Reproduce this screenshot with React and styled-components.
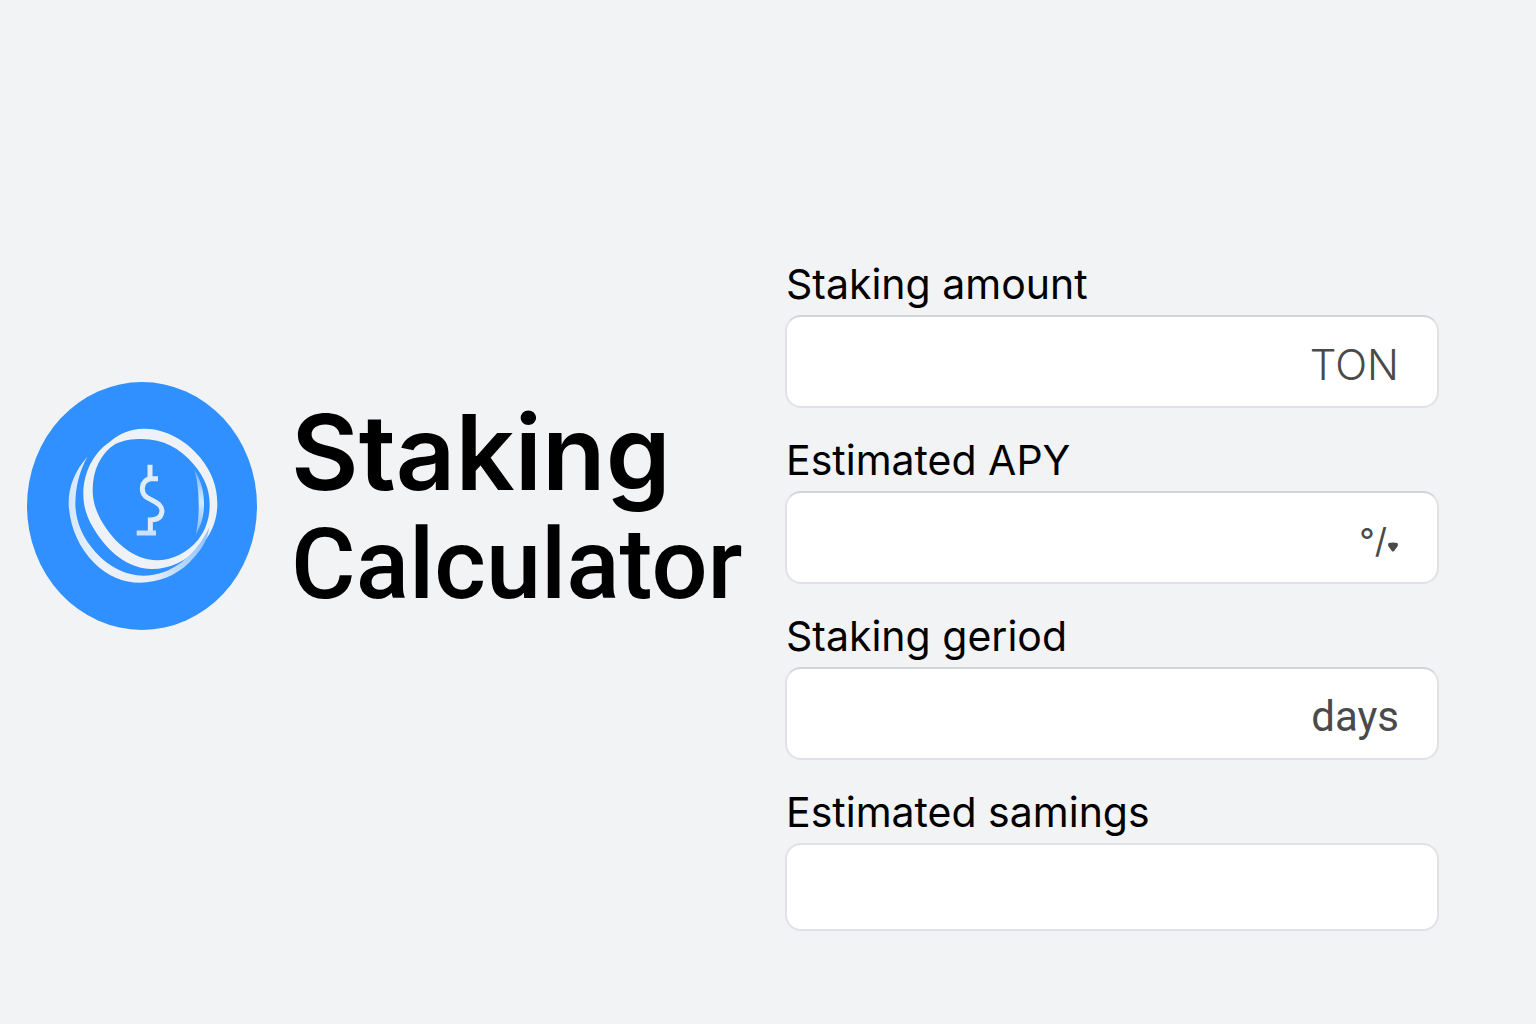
import React, { useState } from 'react'
import styled, { createGlobalStyle } from 'styled-components'

const cor_fundo = '#f2f3f5'
const cor_azul = '#3190ff'
const cor_texto = '#000000'
const cor_unidade = '#4a4a4a'
const cor_borda = '#e0e2e7'

const FIELDS = [
    { id: 'amount', label: 'Staking amount', unit: 'TON', tone: 'light' },
    { id: 'apy', label: 'Estimated APY', unit: '°/', tone: 'small', mark: true },
    { id: 'period', label: 'Staking geriod', unit: 'days', tone: 'regular' },
    { id: 'savings', label: 'Estimated samings' },
]

function CoinLogo() {
    return (
        <Coin viewBox="21 36 690 744" preserveAspectRatio="none" aria-hidden="true">
            <defs>
                <linearGradient id="outer" x1="0" y1="0" x2="1" y2="0">
                    <stop offset="0" stopColor="#d6e8fb" />
                    <stop offset="0.25" stopColor="#eef2f7" />
                    <stop offset="0.6" stopColor="#e6eef8" />
                    <stop offset="1" stopColor="#8cc1fd" />
                </linearGradient>
                <linearGradient id="shine" x1="0" y1="0" x2="0" y2="1">
                    <stop offset="0" stopColor="#6fb2fe" />
                    <stop offset="0.5" stopColor="#d9e9fb" />
                    <stop offset="1" stopColor="#7ab8fe" />
                </linearGradient>
            </defs>
            <ellipse cx="366" cy="408" rx="345" ry="372" fill={cor_azul} />
            <path
                fill="#eef2f7"
                fillRule="evenodd"
                d="M370 176 C434 174 500 212 540 262 C575 305 592 350 592 402 C592 450 574 494 540 530 C500 573 450 597 395 597 C330 595 278 556 240 504 C207 459 190 420 190 372 C190 308 220 248 270 215 C298 190 332 177 370 176 Z
                M366 207 C430 207 480 235 522 284 C552 320 569 356 569 402 C569 445 558 478 534 510 C502 548 456 571 410 571 C350 569 300 532 262 480 C235 442 218 405 218 360 C218 300 242 250 286 222 C310 211 334 207 366 207 Z"
            />
            <path
                fill="url(#outer)"
                d="M202 260 C164 304 145 350 146 404 C150 474 178 534 222 578 C262 618 310 638 360 638 C414 638 466 618 506 580 C542 544 562 514 568 472 C550 510 524 546 486 576 C448 604 412 617 370 617 C318 617 268 592 226 546 C188 502 168 458 166 404 C166 350 178 304 202 260 Z"
            />
            <path
                fill="url(#shine)"
                d="M524 300 C544 334 552 366 552 402 C552 438 544 464 528 492 C534 458 537 430 536 400 C536 366 532 334 524 300 Z"
            />
            <g fill="none" stroke="#dfebf9" strokeWidth="15">
                <path d="M390 284 V326 M414 326 H392 C362 330 360 370 382 383 C400 394 426 400 426 424 C424 446 406 450 391 450 V490" />
                <path d="M350 489 H408" stroke="#cbe0fa" />
            </g>
        </Coin>
    )
}

export default function App() {
    const [values, setValues] = useState({})

    return (
        <>
        <GlobalStyle />
        <Page>
            <Brand>
                <CoinLogo />
                <Title>
                    <FirstLine>Staking</FirstLine>
                    <SecondLine>Calculator</SecondLine>
                </Title>
            </Brand>
            <Form>
                {FIELDS.map(item =>
                    <Field key={item.id}>
                        <Label htmlFor={item.id}>{item.label}</Label>
                        <Box $short={!item.unit}>
                            <Input
                                id={item.id}
                                type="text"
                                value={values[item.id] || ''}
                                onChange={e => setValues({ ...values, [item.id]: e.target.value })}
                            />
                            {item.unit && <Unit $tone={item.tone}>{item.unit}</Unit>}
                            {item.mark &&
                                <Mark viewBox="0 0 10 9" aria-hidden="true">
                                    <path d="M1 1 Q5 0 9 1 Q10 3 9 4 L6 8 Q5 9 4 8 L1 4 Q0 3 1 1 Z" />
                                </Mark>}
                        </Box>
                    </Field>)}
            </Form>
        </Page>
        </>
    )
}

const GlobalStyle = createGlobalStyle`
    * {
        box-sizing: border-box;
    }
    body {
        margin: 0;
        background: ${cor_fundo};
        color: ${cor_texto};
        font-family: Inter, "Liberation Sans", sans-serif;
    }
`

const Page = styled.main`
    min-height: 100vh;
    display: grid;
    grid-template-columns: minmax(0, 714fr) minmax(0, 654fr);
    column-gap: 44px;
    align-items: center;
    padding: 0 97px 0 27px;
`

const Brand = styled.div`
    display: flex;
    align-items: center;
    gap: 34px;
    padding-bottom: 12px;
`

const Coin = styled.svg`
    flex: none;
    width: 230px;
    height: 248px;
`

const Title = styled.h1`
    margin: 0;
    padding-top: 8px;
    white-space: nowrap;
`

const FirstLine = styled.span`
    display: block;
    font-size: 104px;
    font-weight: 600;
    line-height: 108px;
`

const SecondLine = styled.span`
    display: block;
    font-family: Roboto, "Liberation Sans", sans-serif;
    font-size: 99px;
    font-weight: 500;
    line-height: 116px;
`

const Form = styled.form`
    display: flex;
    flex-direction: column;
    gap: 28px;
    padding-top: 167px;
`

const Field = styled.div`
    display: flex;
    flex-direction: column;
    gap: 7px;
`

const Label = styled.label`
    padding-left: 1px;
    font-size: 41px;
    line-height: 48px;
`

const Box = styled.div`
    display: flex;
    align-items: center;
    height: ${props => props.$short ? '88px' : '93px'};
    padding: 6px 38px 0 24px;
    background: #ffffff;
    border: 2px solid ${cor_borda};
    border-top-color: ${props => props.$short ? cor_borda : '#d3d5db'};
    border-radius: 16px;
`

const Input = styled.input`
    flex: 1;
    min-width: 0;
    height: 100%;
    padding: 0;
    border: none;
    outline: none;
    background: transparent;
    font: inherit;
    font-size: 41px;
`

const TONES = {
    light: 'font-size: 42px; font-weight: 300;',
    small: 'font-size: 34px; font-weight: 400;',
    regular: 'font-size: 42px; font-weight: 400; font-family: Roboto, "Liberation Sans", sans-serif;',
}

const Unit = styled.span`
    color: ${cor_unidade};
    line-height: 48px;
    ${props => TONES[props.$tone]}
`

const Mark = styled.svg`
    width: 12px;
    height: 10px;
    margin-top: 12px;
    fill: ${cor_unidade};
`
